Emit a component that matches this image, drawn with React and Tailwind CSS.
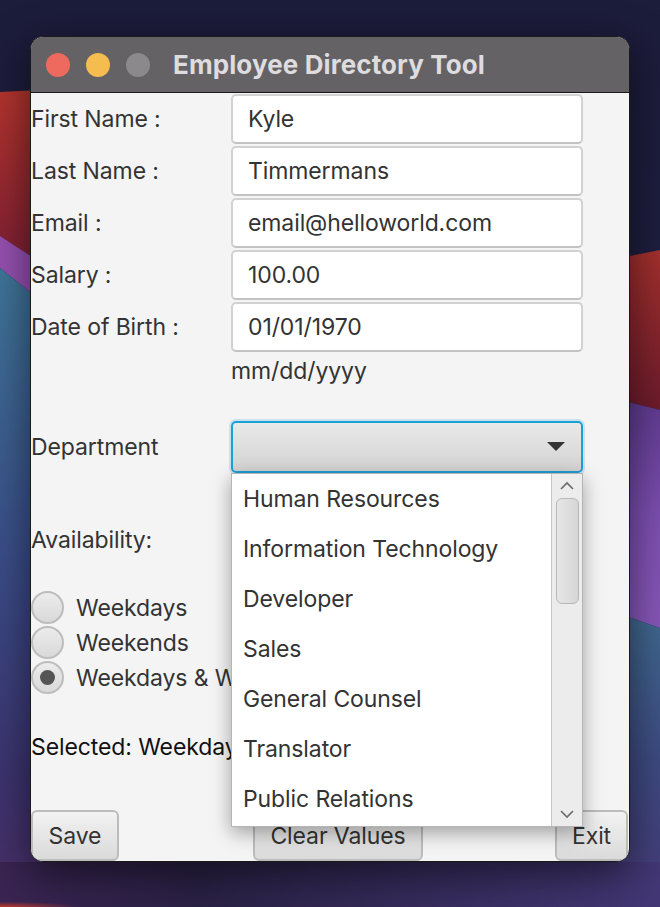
import { useState } from 'react';

const FIELDS = [
  { label: 'First Name :', value: 'Kyle' },
  { label: 'Last Name :', value: 'Timmermans' },
  { label: 'Email :', value: 'email@helloworld.com' },
  { label: 'Salary :', value: '100.00' },
  { label: 'Date of Birth :', value: '01/01/1970' },
];

const DEPARTMENTS = [
  'Human Resources',
  'Information Technology',
  'Developer',
  'Sales',
  'General Counsel',
  'Translator',
  'Public Relations',
];

const AVAILABILITY = ['Weekdays', 'Weekends', 'Weekdays & Weekends'];

const Wallpaper = () => (
  <svg className="absolute inset-0" width="660" height="907" viewBox="0 0 660 907">
    <defs>
      <linearGradient id="base" x1="0" y1="0" x2="0" y2="1">
        <stop offset="0" stopColor="#1c1c3b" />
        <stop offset="0.6" stopColor="#1f1f42" />
        <stop offset="1" stopColor="#3a2c62" />
      </linearGradient>
      <linearGradient id="redL" x1="0" y1="0" x2="0" y2="1">
        <stop offset="0" stopColor="#b3342d" />
        <stop offset="1" stopColor="#7e1f33" />
      </linearGradient>
      <linearGradient id="tealL" x1="0" y1="0" x2="0" y2="1">
        <stop offset="0" stopColor="#3f7598" />
        <stop offset="0.45" stopColor="#3a4d88" />
        <stop offset="0.8" stopColor="#3c336e" />
        <stop offset="1" stopColor="#4a2e66" />
      </linearGradient>
      <linearGradient id="redR" x1="0" y1="0" x2="0" y2="1">
        <stop offset="0" stopColor="#a3302d" />
        <stop offset="1" stopColor="#6c1b2c" />
      </linearGradient>
      <linearGradient id="purR" x1="0" y1="0" x2="0" y2="1">
        <stop offset="0" stopColor="#5e3a8e" />
        <stop offset="0.5" stopColor="#7c4eb0" />
        <stop offset="1" stopColor="#8757b8" />
      </linearGradient>
      <linearGradient id="blueR" x1="0" y1="0" x2="0" y2="1">
        <stop offset="0" stopColor="#40688f" />
        <stop offset="0.5" stopColor="#3d4a80" />
        <stop offset="1" stopColor="#463a78" />
      </linearGradient>
      <linearGradient id="bottom" x1="0" y1="0" x2="1" y2="0">
        <stop offset="0" stopColor="#3a2452" />
        <stop offset="0.3" stopColor="#2a2145" />
        <stop offset="1" stopColor="#433775" />
      </linearGradient>
      <radialGradient id="glow" cx="0" cy="1" r="0.12">
        <stop offset="0" stopColor="#c0392b" />
        <stop offset="1" stopColor="#c0392b" stopOpacity="0" />
      </radialGradient>
    </defs>
    <rect width="660" height="907" fill="url(#base)" />
    <polygon points="0,92 40,90 40,262 0,236" fill="url(#redL)" />
    <polygon points="0,236 40,262 40,300 0,268" fill="#9550b0" />
    <polygon points="0,268 40,300 40,907 0,907" fill="url(#tealL)" />
    <polygon points="620,258 660,250 660,410 620,400" fill="url(#redR)" />
    <polygon points="620,400 660,410 660,628 620,614" fill="url(#purR)" />
    <polygon points="620,614 660,628 660,907 620,907" fill="url(#blueR)" />
    <rect x="0" y="862" width="660" height="45" fill="url(#bottom)" />
    <rect x="0" y="862" width="660" height="45" fill="url(#glow)" />
  </svg>
);

const Chevron = ({ up }) => (
  <svg width="16" height="10" viewBox="0 0 16 10">
    <path d={up ? 'M2 8 L8 2 L14 8' : 'M2 2 L8 8 L14 2'} fill="none" stroke="#6b6b6b" strokeWidth="1.6" />
  </svg>
);

const Radio = ({ checked, label }) => (
  <div className="flex items-center h-[35px]">
    <div className="shrink-0 w-[33px] h-[33px] rounded-full border-2 border-[#bdbdbd] bg-[linear-gradient(#ececec,#d9d9d9)] flex items-center justify-center">
      {checked && <div className="w-[15px] h-[15px] rounded-full bg-[#555]" />}
    </div>
    <span className="ml-[12px] text-[#333] whitespace-nowrap">{label}</span>
  </div>
);

const Button = ({ children, className }) => (
  <div className={`h-[51px] border-2 border-[#bcbcbc] rounded-[6px] bg-[linear-gradient(#f2f2f2,#dadada)] flex items-center justify-center text-[#333] ${className}`}>
    {children}
  </div>
);

export default function App() {
  const [selected] = useState(2);

  return (
    <div className="relative w-[660px] h-[907px] overflow-hidden font-['Inter',sans-serif] text-[23px] leading-[28px] tracking-[-0.1px]">
      <Wallpaper />

      <div className="relative pt-[36px] pl-[30px]">
        <div className="relative w-[600px] h-[826px] rounded-[13px] border border-[#1a1a1a] bg-[#f4f4f4] overflow-hidden shadow-[0_12px_40px_rgba(0,0,0,0.55)]">
          {/* title bar */}
          <div className="h-[56px] bg-[#646264] border-b border-[#1a1a1a] flex items-center pl-[15px]">
            <div className="w-[24px] h-[24px] rounded-full bg-[#ee6a5e]" />
            <div className="w-[24px] h-[24px] rounded-full bg-[#f5bd4f] ml-[16px]" />
            <div className="w-[24px] h-[24px] rounded-full bg-[#8b898b] ml-[16px]" />
            <span className="ml-[23px] text-[26px] font-bold text-[#dedcde] tracking-[0.1px]">Employee Directory Tool</span>
          </div>

          {/* form */}
          <div className="pt-[1px] flex flex-col gap-[2px]">
            {FIELDS.map(f => (
              <div key={f.label} className="flex items-center h-[50px]">
                <span className="w-[200px] text-[#333]">{f.label}</span>
                <div className="w-[352px] h-[50px] bg-white border-2 border-[#d2d2d2] border-b-[#c2c2c2] rounded-[5px] flex items-center pl-[15px] text-[#333]">
                  {f.value}
                </div>
              </div>
            ))}
          </div>
          <div className="pl-[200px] mt-[5px] text-[#333]">mm/dd/yyyy</div>

          <div className="flex items-center h-[52px] mt-[36px]">
            <span className="w-[200px] text-[#333]">Department</span>
            <div className="w-[352px] h-[52px] rounded-[5px] border-2 border-[#1ba0d8] bg-[linear-gradient(#e9e9e9,#d3d3d3)] shadow-[0_0_0_2px_rgba(27,160,216,0.2)] flex items-center justify-end pr-[16px]">
              <svg width="18" height="10" viewBox="0 0 18 10">
                <polygon points="0,0 18,0 9,9" fill="#333" />
              </svg>
            </div>
          </div>

          <div className="mt-[53px] text-[#333]">Availability:</div>

          <div className="mt-[36px] w-[200px] overflow-hidden flex flex-col">
            {AVAILABILITY.map((a, i) => (
              <Radio key={a} label={a} checked={i === selected} />
            ))}
          </div>

          <div className="mt-[38px] w-[200px] overflow-hidden text-[#111] whitespace-nowrap">Selected: Weekdays &amp; Weekends</div>

          <div className="absolute left-0 right-0 bottom-0 flex items-end">
            <Button className="w-[88px]">Save</Button>
            <Button className="w-[170px] ml-[134px]">Clear Values</Button>
            <Button className="w-[73px] ml-auto mr-[1px]">Exit</Button>
          </div>

          {/* dropdown popup */}
          <div className="absolute left-[200px] top-[436px] w-[352px] h-[354px] bg-white border border-[#b5b5b5] shadow-[0_6px_18px_rgba(0,0,0,0.35)] flex">
            <div className="flex-1 flex flex-col">
              {DEPARTMENTS.map(d => (
                <div key={d} className="h-[50px] flex items-center pl-[11px] text-[#333] whitespace-nowrap">{d}</div>
              ))}
            </div>
            <div className="w-[31px] bg-[#ececec] border-l border-[#c6c6c6] flex flex-col items-center">
              <div className="h-[24px] flex items-center justify-center">
                <Chevron up />
              </div>
              <div className="w-[23px] h-[106px] rounded-[6px] border border-[#b8b8b8] bg-[linear-gradient(90deg,#e6e6e6,#d6d6d6)]" />
              <div className="flex-1" />
              <div className="h-[24px] flex items-center justify-center">
                <Chevron />
              </div>
            </div>
          </div>
        </div>
      </div>
    </div>
  );
}
